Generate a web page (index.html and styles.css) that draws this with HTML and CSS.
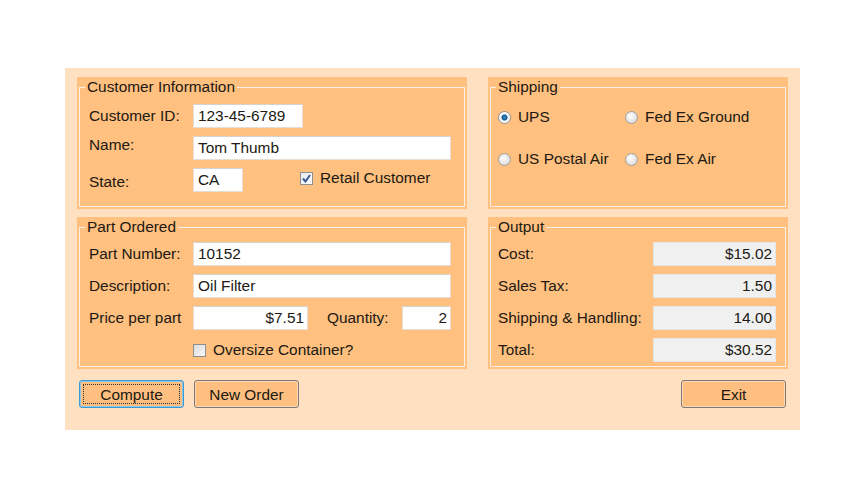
FILE: index.html
```html
<!DOCTYPE html>
<html>
<head>
<meta charset="utf-8">
<link rel="stylesheet" href="styles.css">
</head>
<body>
<div class="form">
  <div class="groups">
    <div class="group">
      <fieldset class="box">
        <legend>Customer Information</legend>
        <div class="content cust">
          <span class="lbl">Customer ID:</span>
          <div class="field"><span class="tb w110">123-45-6789</span></div>
          <span class="lbl up">Name:</span>
          <div class="field"><span class="tb full">Tom Thumb</span></div>
          <span class="lbl down">State:</span>
          <div class="field">
            <span class="tb w50">CA</span>
            <label class="chk retail"><span class="cb checked"><svg width="9" height="9" viewBox="0 0 9 9"><path d="M1 4.5 L3.5 7.5 L8 1" fill="none" stroke="#3a5a90" stroke-width="2"/></svg></span>Retail Customer</label>
          </div>
        </div>
      </fieldset>
    </div>
    <div class="group">
      <fieldset class="box">
        <legend>Shipping</legend>
        <div class="content ship">
          <label class="rad"><span class="rb on"></span>UPS</label>
          <label class="rad"><span class="rb"></span>Fed Ex Ground</label>
          <label class="rad"><span class="rb"></span>US Postal Air</label>
          <label class="rad"><span class="rb"></span>Fed Ex Air</label>
        </div>
      </fieldset>
    </div>
    <div class="group">
      <fieldset class="box">
        <legend>Part Ordered</legend>
        <div class="content part">
          <span class="lbl">Part Number:</span>
          <div class="field"><span class="tb full">10152</span></div>
          <span class="lbl">Description:</span>
          <div class="field"><span class="tb full">Oil Filter</span></div>
          <span class="lbl">Price per part</span>
          <div class="field">
            <span class="tb w115 r">$7.51</span>
            <span class="lbl qty">Quantity:</span>
            <span class="tb w49 r">2</span>
          </div>
          <span></span>
          <div class="field chkrow">
            <label class="chk"><span class="cb"></span>Oversize Container?</label>
          </div>
        </div>
      </fieldset>
    </div>
    <div class="group">
      <fieldset class="box">
        <legend>Output</legend>
        <div class="content out">
          <span class="lbl">Cost:</span>
          <span class="tb ro r">$15.02</span>
          <span class="lbl">Sales Tax:</span>
          <span class="tb ro r">1.50</span>
          <span class="lbl">Shipping &amp; Handling:</span>
          <span class="tb ro r">14.00</span>
          <span class="lbl">Total:</span>
          <span class="tb ro r">$30.52</span>
        </div>
      </fieldset>
    </div>
  </div>
  <div class="buttons">
    <div class="left">
      <button class="btn focus">Compute</button>
      <button class="btn">New Order</button>
    </div>
    <button class="btn">Exit</button>
  </div>
</div>
</body>
</html>
```
FILE: styles.css
```css
* { box-sizing: border-box; }
body {
  margin: 0;
  background: #ffffff;
  font-family: "Liberation Sans", Arial, sans-serif;
  font-size: 15.4px;
  color: #211912;
}
.form {
  margin: 68px 0 0 65px;
  width: 735px;
  height: 362px;
  background: #ffe0c0;
  padding: 9px 12px 0;
}
.groups {
  display: grid;
  grid-template-columns: 390px 300px;
  grid-template-rows: 132px 152px;
  column-gap: 21px;
  row-gap: 8px;
}
.group {
  background: #ffc080;
  padding: 1px 2px 2px;
}
.box {
  margin: 0;
  height: 100%;
  border: 1px solid #f8efe6;
  padding: 0;
  min-width: 0;
}
.box legend {
  margin-left: 5px;
  padding: 0 2px;
  line-height: 18px;
}
.content {
  display: grid;
  align-items: center;
}
.cust {
  padding: 8px 13px 0 9px;
  grid-template-columns: 104px 1fr;
  grid-auto-rows: 24px;
  row-gap: 8px;
}
.part {
  padding: 6px 13px 0 9px;
  grid-template-columns: 104px 1fr;
  grid-auto-rows: 24px;
  row-gap: 8px;
}
.out {
  padding: 6px 9px 0 7px;
  grid-template-columns: 155px 123px;
  grid-auto-rows: 24px;
  row-gap: 8px;
}
.ship {
  padding: 13px 0 0 7px;
  grid-template-columns: 127px auto;
  grid-auto-rows: 16px;
  row-gap: 26px;
}
.lbl { white-space: nowrap; line-height: 18px; }
.lbl.up { position: relative; top: -3px; }
.lbl.down { position: relative; top: 2px; }
.field {
  display: flex;
  align-items: center;
  height: 24px;
}
.tb {
  display: block;
  height: 24px;
  line-height: 22px;
  padding: 0 4px;
  background: #ffffff;
  border: 1px solid #e6ddd4;
  border-top-color: #d8d2cc;
  white-space: nowrap;
}
.tb.r { text-align: right; padding-right: 3px; }
.tb.ro { background: #f0f0f0; border-color: #e4e4e4; }
.full { width: 100%; }
.w110 { width: 110px; }
.w50 { width: 50px; }
.w115 { width: 115px; }
.w49 { width: 49px; margin-left: auto; }
.qty { margin-left: 19px; }
.chk, .rad {
  display: flex;
  align-items: center;
  white-space: nowrap;
  line-height: 18px;
}
.retail { margin-left: 57px; position: relative; top: -2px; }
.chkrow { padding-top: 0; }
.cb {
  width: 13px;
  height: 13px;
  border: 1px solid #8e8f8f;
  background: linear-gradient(135deg, #dcdcdc, #f7f7f7);
  margin-right: 7px;
  display: flex;
  align-items: center;
  justify-content: center;
  flex: none;
}
.cb.checked { background: linear-gradient(135deg, #e4e8ee, #ffffff); }
.rb {
  width: 13px;
  height: 13px;
  border-radius: 50%;
  border: 1px solid #a0a0a0;
  background: radial-gradient(circle at 40% 40%, #ffffff 0, #e6e6e6 55%, #cfcfcf 100%);
  margin-right: 7px;
  flex: none;
}
.rb.on {
  border-color: #8a8f96;
  background: radial-gradient(circle at 50% 50%, #3a8ed0 0, #16598f 2.5px, #e8eef4 3.5px, #ffffff 5px, #d8dde2 100%);
}
.buttons {
  margin-top: 11px;
  padding: 0 2px;
  display: flex;
  justify-content: space-between;
}
.left { display: flex; gap: 10px; }
.btn {
  position: relative;
  width: 105px;
  height: 28px;
  font-family: "Liberation Sans", Arial, sans-serif;
  font-size: 15.4px;
  color: #211912;
  background: #ffbf80;
  border: 1px solid #7a7a7a;
  border-radius: 3px;
  box-shadow: inset 0 0 0 1px #ffd6ad;
  padding: 2px 0 0;
}
.btn.focus {
  border-color: #3a9ad8;
  box-shadow: inset 0 0 0 1px #8cc8ee;
}
.btn.focus::after {
  content: "";
  position: absolute;
  left: 3px;
  top: 3px;
  right: 3px;
  bottom: 3px;
  border: 1px dotted #333;
}
```
